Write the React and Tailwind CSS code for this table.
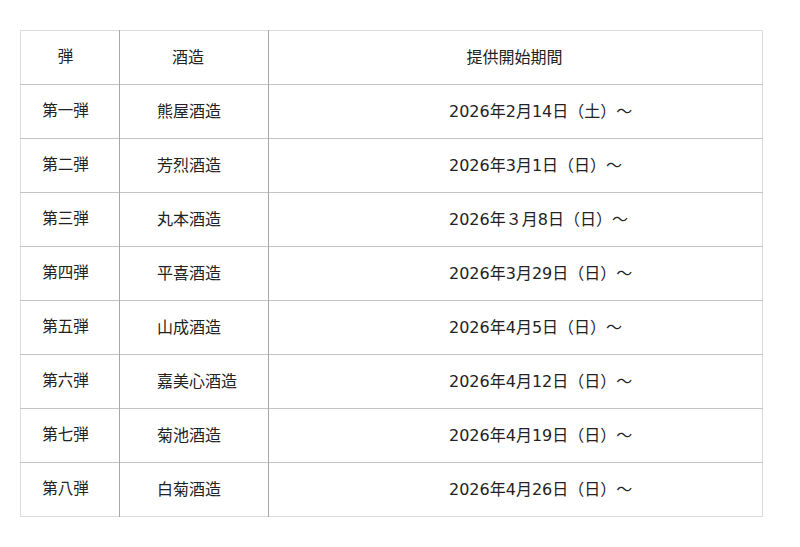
import React from 'react'

const rows = [
  { no: '第一弾', name: '熊屋酒造', date: '2026年2月14日（土）～' },
  { no: '第二弾', name: '芳烈酒造', date: '2026年3月1日（日）～' },
  { no: '第三弾', name: '丸本酒造', date: '2026年３月8日（日）～' },
  { no: '第四弾', name: '平喜酒造', date: '2026年3月29日（日）～' },
  { no: '第五弾', name: '山成酒造', date: '2026年4月5日（日）～' },
  { no: '第六弾', name: '嘉美心酒造', date: '2026年4月12日（日）～' },
  { no: '第七弾', name: '菊池酒造', date: '2026年4月19日（日）～' },
  { no: '第八弾', name: '白菊酒造', date: '2026年4月26日（日）～' },
]

const App = () => {
  return (
    <div className="bg-white w-[800px] h-[547px] pt-[30px] pl-[20px] text-[#222] font-['DejaVu_Sans','Noto_Sans_CJK_JP',sans-serif]">
      <table className="border-collapse border border-[#dcdcdc] w-[742px] table-fixed">
        <colgroup>
          <col className="w-[99px]" />
          <col className="w-[149px]" />
          <col className="w-[494px]" />
        </colgroup>
        <thead>
          <tr className="h-[54px] border-b border-[#c4c4c4]">
            <th className="font-normal text-[15.5px] text-center pr-[9px] border-r border-[#a8a8a8]">弾</th>
            <th className="font-normal text-[16px] text-center pr-[12px] border-r border-[#a8a8a8]">酒造</th>
            <th className="font-normal text-[16px] text-center pr-[2px]">提供開始期間</th>
          </tr>
        </thead>
        <tbody>
          {rows.map((r, i) => (
            <tr key={r.no} className={`h-[54px] ${i < rows.length - 1 ? 'border-b border-[#c4c4c4]' : ''}`}>
              <td className="text-[15.5px] text-center pr-[9px] border-r border-[#a8a8a8]">{r.no}</td>
              <td className="text-[16px] text-left pl-[37px] border-r border-[#a8a8a8]">{r.name}</td>
              <td className="text-[16px] text-left pl-[180px]">{r.date}</td>
            </tr>
          ))}
        </tbody>
      </table>
    </div>
  )
}

export default App
